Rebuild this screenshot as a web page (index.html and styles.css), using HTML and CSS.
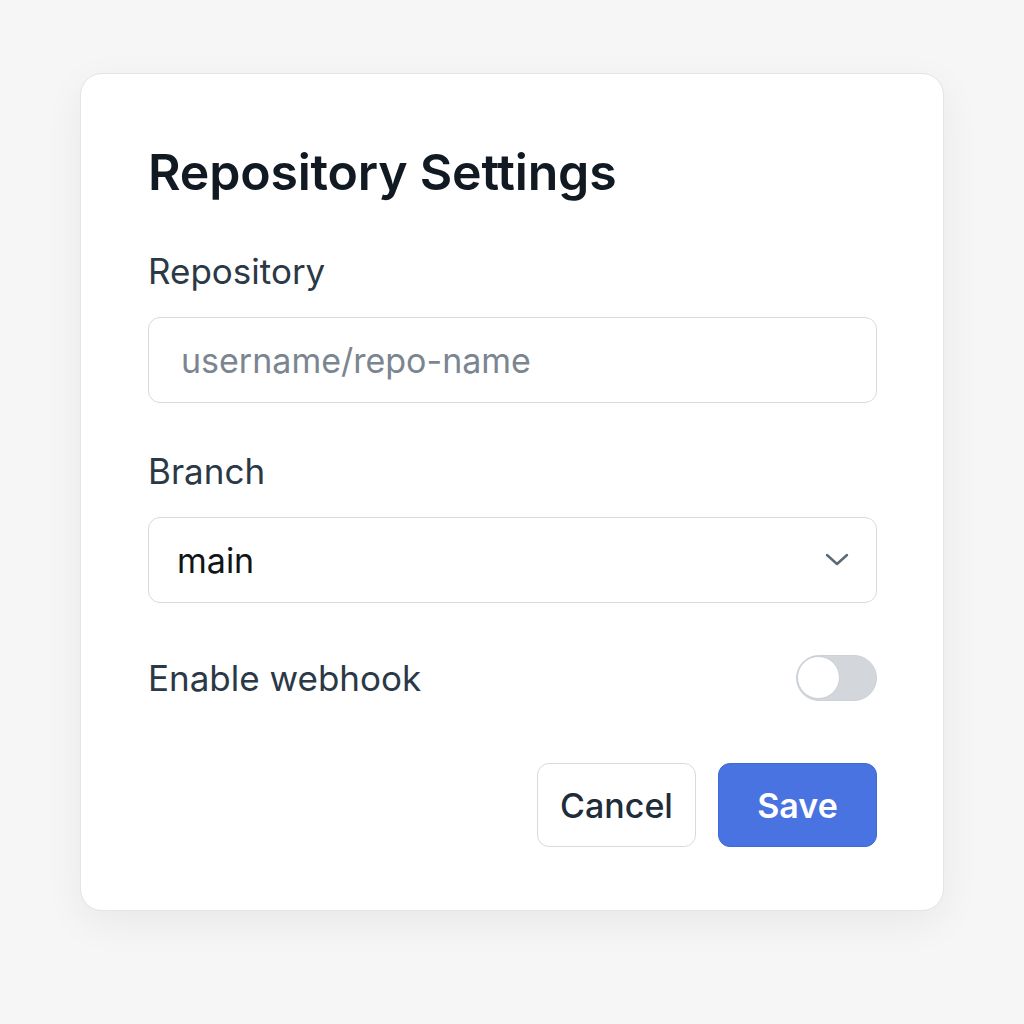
FILE: index.html
```html
<!DOCTYPE html>
<html>
<head>
<meta charset="utf-8">
<link rel="stylesheet" href="styles.css">
</head>
<body>
<div class="card">
  <h1 class="title">Repository Settings</h1>
  <label class="label">Repository</label>
  <div class="field"><span class="placeholder">username/repo-name</span></div>
  <label class="label label-branch">Branch</label>
  <div class="field select"><span class="value">main</span>
    <svg class="chev" width="26" height="16" viewBox="0 0 26 16"><path d="M3 3 L13 12 L23 3" fill="none" stroke="#5b6876" stroke-width="2.4" stroke-linecap="round" stroke-linejoin="round"/></svg>
  </div>
  <div class="row">
    <span class="row-label">Enable webhook</span>
    <div class="toggle"><div class="knob"></div></div>
  </div>
  <div class="actions">
    <button class="btn cancel">Cancel</button>
    <button class="btn save">Save</button>
  </div>
</div>
</body>
</html>
```
FILE: styles.css
```css
html, body { margin: 0; padding: 0; }
body {
  background: #f6f6f6;
  font-family: Inter, "Noto Sans", sans-serif;
  width: 1024px; height: 1024px;
}
.card {
  box-sizing: border-box;
  margin: 73px 0 0 80px;
  width: 864px;
  height: 838px;
  background: #fff;
  border: 1px solid #e2e4e7;
  border-radius: 22px;
  box-shadow: 0 12px 40px rgba(0,0,0,0.06);
  padding: 0 66px 0 67px;
  display: flex;
  flex-direction: column;
}
.title {
  margin: 66px 0 0 0;
  font-size: 50px;
  font-weight: 600;
  color: #111a22;
  line-height: 64px;
  letter-spacing: -0.2px;
}
.label {
  margin-top: 43px;
  font-size: 35px;
  color: #2b3947;
  line-height: 48px;
}
.label-branch { margin-top: 44px; }
.field {
  box-sizing: border-box;
  margin-top: 22px;
  height: 86px;
  border: 1.5px solid #d6dadf;
  border-radius: 12px;
  display: flex;
  align-items: center;
  padding-left: 32px;
}
.placeholder { font-size: 34px; color: #7b8591; }
.select { padding-left: 28px; padding-right: 26px; justify-content: space-between; }
.value { font-size: 34px; color: #121418; }
.row {
  margin-top: 51px;
  display: flex;
  justify-content: space-between;
  align-items: center;
  height: 48px;
}
.row-label { font-size: 35px; color: #2b3947; }
.toggle {
  box-sizing: border-box;
  width: 81px; height: 46px;
  border-radius: 23px;
  background: #d3d7dc;
  border: 1.5px solid #cdd2d8;
  position: relative;
}
.knob {
  position: absolute;
  left: 0; top: 0;
  width: 43px; height: 43px;
  border-radius: 50%;
  background: #fff;
  border: 1.5px solid #c9ced5;
  box-sizing: border-box;
}
.actions {
  margin-top: 61px;
  display: flex;
  justify-content: flex-end;
  gap: 22px;
  padding-right: 0;
}
.btn {
  box-sizing: border-box;
  height: 84px;
  width: 159px;
  border-radius: 12px;
  font-family: Inter, "Noto Sans", sans-serif;
  font-size: 34px;
  cursor: pointer;
}
.cancel {
  background: #fff;
  border: 1.5px solid #d6dadf;
  color: #1f2c3a;
  font-weight: 450;
}
.save {
  background: #4a73e2;
  border: 1.5px solid #3f68d8;
  color: #fff;
  font-weight: 600;
}
```
